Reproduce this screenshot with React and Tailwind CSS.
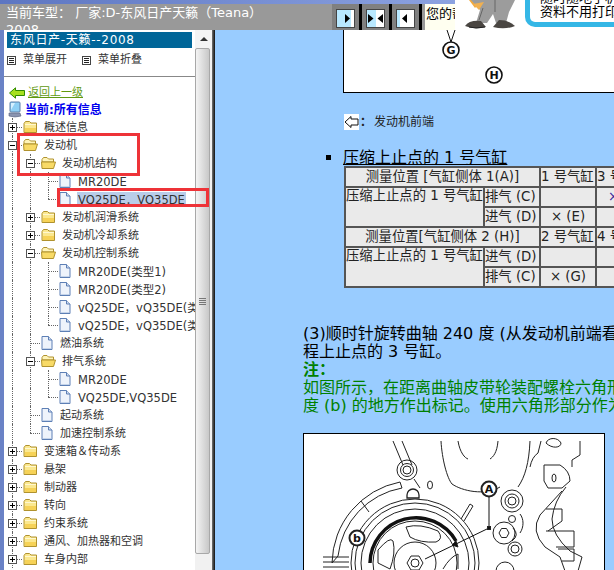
import React from 'react';

const rows = [
  { d: 0, t: '概述信息', k: 'plus' },
  { d: 0, t: '发动机', k: 'minus' },
  { d: 1, t: '发动机结构', k: 'minus' },
  { d: 2, t: 'MR20DE' },
  { d: 2, t: 'VQ25DE．VQ35DE', last: true, sel: true },
  { d: 1, t: '发动机润滑系统', k: 'plus' },
  { d: 1, t: '发动机冷却系统', k: 'plus' },
  { d: 1, t: '发动机控制系统', k: 'minus' },
  { d: 2, t: 'MR20DE(类型1)' },
  { d: 2, t: 'MR20DE(类型2)' },
  { d: 2, t: 'vQ25DE，vQ35DE(类型1)' },
  { d: 2, t: 'vQ25DE，vQ35DE(类型2)', last: true },
  { d: 1, t: '燃油系统' },
  { d: 1, t: '排气系统', k: 'minus' },
  { d: 2, t: 'MR20DE' },
  { d: 2, t: 'VQ25DE,VQ35DE', last: true },
  { d: 1, t: '起动系统' },
  { d: 1, t: '加速控制系统', last: true },
  { d: 0, t: '变速箱＆传动系', k: 'plus' },
  { d: 0, t: '悬架', k: 'plus' },
  { d: 0, t: '制动器', k: 'plus' },
  { d: 0, t: '转向', k: 'plus' },
  { d: 0, t: '约束系统', k: 'plus' },
  { d: 0, t: '通风、加热器和空调', k: 'plus' },
  { d: 0, t: '车身内部', k: 'plus' },
];

function FolderClosed() {
  return (
    <svg width="15" height="14" viewBox="0 0 15 14" className="shrink-0 ml-[1px]">
      <path d="M1 3.5 L2.5 1.5 H6.5 L8 3 H13.5 V12.5 H1 Z" fill="#fbe88f" stroke="#b0922e" />
      <path d="M2 8 H13 V12 H2 Z" fill="#f6d257" />
      <path d="M2 4.5 H13" stroke="#fff8d0" />
    </svg>
  );
}

function FolderOpen() {
  return (
    <svg width="15" height="14" viewBox="0 0 15 14" className="shrink-0 ml-[1px]">
      <path d="M1 3.5 L2.5 1.5 H6 L7.5 3 H12.5 V6 H1 Z" fill="#fff4b8" stroke="#b0922e" />
      <path d="M1 12.5 L0.5 6 H14.5 L12.5 12.5 Z" fill="#f8da66" stroke="#b0922e" />
    </svg>
  );
}

function PageIcon() {
  return (
    <svg width="12" height="14" viewBox="0 0 12 14" className="shrink-0 ml-[1px]">
      <path d="M1 0.5 H7.5 L11 4 V13.5 H1 Z" fill="#eef3fb" stroke="#5d7fb5" />
      <path d="M7.5 0.5 V4 H11" fill="#cfdcf0" stroke="#5d7fb5" />
      <path d="M2 12.5 H10" stroke="#c5d4ea" />
    </svg>
  );
}

function Guide() {
  return (
    <span className="relative w-[18px] h-[18px] shrink-0">
      <span className="absolute left-[8px] top-0 bottom-0 border-l border-dotted border-[#666]" />
    </span>
  );
}

function Connector({ k, last }) {
  return (
    <span className="relative w-[18px] h-[18px] shrink-0">
      <span className={last ? 'absolute left-[8px] top-0 h-[9px] border-l border-dotted border-[#666]' : 'absolute left-[8px] top-0 bottom-0 border-l border-dotted border-[#666]'} />
      <span className="absolute left-[8px] top-[9px] w-[10px] border-t border-dotted border-[#666]" />
      {k && (
        <svg width="9" height="9" viewBox="0 0 9 9" className="absolute left-[4px] top-[5px]">
          <rect x="0.5" y="0.5" width="8" height="8" fill="#fff" stroke="#555" />
          <path d={k === 'plus' ? 'M2 4.5 H7 M4.5 2 V7' : 'M2 4.5 H7'} stroke="#000" />
        </svg>
      )}
    </span>
  );
}

function TreeRow({ row }) {
  const { d, t, k, last, sel } = row;
  let label = k ? 'ml-[6px] mt-[2px] leading-[14px]' : 'ml-[7px] mt-[2px] leading-[14px]';
  if (d === 2) label = 'ml-[7px] mt-[2px] leading-[14px] text-[11.5px]';
  if (sel) label = 'ml-[6px] px-[1px] h-[14px] leading-[16px] text-[11.5px] bg-[#b9cde9]';
  return (
    <div className="flex items-center h-[18px] whitespace-nowrap">
      {d > 0 && <Guide />}
      {d > 1 && <Guide />}
      <Connector k={k} last={last} />
      {k === 'plus' && <FolderClosed />}
      {k === 'minus' && <FolderOpen />}
      {!k && <PageIcon />}
      <span className={label}>{t}</span>
    </div>
  );
}

function MenuIcon() {
  return (
    <svg width="9" height="9" viewBox="0 0 9 9" className="shrink-0">
      <rect x="0.5" y="0.5" width="8" height="8" fill="#fff" stroke="#444" />
      <path d="M2 2.5 H7 M2 4.5 H7 M2 6.5 H7" stroke="#222" />
    </svg>
  );
}

function Sidebar() {
  return (
    <aside className="flex w-[215px] shrink-0 h-full">
      <div className="w-[4px] bg-[#6a82c6] shrink-0" />
      <div className="w-[191px] shrink-0 bg-white overflow-hidden text-[11px] text-[#333]">
        <div className="mt-[2px] mx-[3px] h-[16px] bg-[#006699] text-white text-[12px] tracking-[0.7px] leading-[16px] pl-[3px] whitespace-nowrap">东风日产-天籁--2008</div>
        <div className="flex items-center h-[16px] mt-[4px] pl-[3px]">
          <MenuIcon />
          <span className="ml-[7px]">菜单展开</span>
          <span className="w-[15px]" />
          <MenuIcon />
          <span className="ml-[7px]">菜单折叠</span>
        </div>
        <div className="mt-[8px] h-[1px] bg-[#888]" />
        <div className="flex items-center h-[16px] mt-[8px] pl-[5px]">
          <svg width="16" height="12" viewBox="0 0 16 12" className="shrink-0">
            <path d="M0.5 6 L6.5 0.8 V3.5 H15.5 V8.5 H6.5 V11.2 Z" fill="#a6e01e" stroke="#2f8a00" />
          </svg>
          <span className="ml-[3px] text-[#5f9a10] underline">返回上一级</span>
        </div>
        <div className="flex items-center h-[17px] pl-[4px]">
          <svg width="14" height="17" viewBox="0 0 14 17" className="shrink-0">
            <rect x="2" y="1" width="10" height="10" rx="1" fill="#8fd0f5" stroke="#5c7fa8" />
            <path d="M3 2 L7 2 L3 9 Z" fill="#d6f0ff" />
            <path d="M1 12 H12 L13 15 Q7 17 1 15 Z" fill="#8a94b0" stroke="#55607e" strokeWidth="0.6" />
          </svg>
          <span className="ml-[3px] text-[12px] font-bold text-[#0000ee]">当前:所有信息</span>
        </div>
        {rows.map((row, i) => <TreeRow key={i} row={row} />)}
      </div>
      <div className="w-[17px] shrink-0 bg-[#f1f1f1] flex flex-col items-center">
        <div className="h-[18px] w-full flex items-center justify-center bg-[#f4f4f4]">
          <span className="w-0 h-0 border-x-[4px] border-x-transparent border-b-[4px] border-b-[#333]" />
        </div>
        <div className="h-[506px] w-[15px] self-start border border-[#a8a8a8] rounded-[2px] bg-gradient-to-r from-[#f4f4f4] to-[#c8c8c8] flex items-center justify-center">
          <div className="w-[7px] flex flex-col gap-[1px]">
            <span className="h-[1px] bg-[#777]" />
            <span className="h-[1px] bg-[#777]" />
            <span className="h-[1px] bg-[#777]" />
            <span className="h-[1px] bg-[#777]" />
          </div>
        </div>
      </div>
      <div className="w-[3px] shrink-0 bg-gradient-to-r from-[#777] to-[#111]" />
    </aside>
  );
}

function ToolButton({ blue, arrows }) {
  return (
    <div className="w-[30px] h-[26px] shrink-0 bg-[#808080] border-r-[3px] border-r-black pl-[4px] pt-[5px]">
      <svg width="19" height="19" viewBox="0 0 19 19">
        <rect x="0.5" y="0.5" width="18" height="18" fill="#fff" stroke="#444" />
        <rect x="1" y="1" width={blue} height="17" fill="#b8e8ff" />
        {arrows === 'right' && <path d="M9 5 L14 9.5 L9 14 Z" fill="#000" />}
        {arrows === 'left' && <path d="M11 5 L6 9.5 L11 14 Z" fill="#000" />}
        {arrows === 'both' && <path d="M2 5 L7.5 9.5 L2 14 Z M17 5 L11.5 9.5 L17 14 Z" fill="#000" />}
      </svg>
    </div>
  );
}

function Mascot() {
  return (
    <div className="w-[66px] h-[30px] shrink-0 bg-white">
      <svg width="66" height="30" viewBox="0 0 66 30">
        <path d="M14 0 L20 8 L27 0 Z" fill="#f2a93c" />
        <path d="M16 0 H60 L54 12 L51 23 H41 L38 14 L32 23 H21 L25 10 Z" fill="#9c9c9c" />
        <path d="M40 0 V12 M28 8 L24 20" stroke="#666" fill="none" />
        <path d="M18 4 L24 10 L29 2 Z" fill="#f0b050" />
        <path d="M10 26 Q14 20 26 21 L31 27 Q20 30 10 26 Z" fill="#4a4642" />
        <path d="M38 27 L44 20 Q54 20 60 26 Q50 30 38 27 Z" fill="#4a4642" />
        <path d="M14 27 Q20 29 30 27" stroke="#222" fill="none" />
      </svg>
    </div>
  );
}

function Header() {
  return (
    <header className="flex h-[30px] shrink-0 overflow-hidden">
      <div className="w-[455px] shrink-0 flex flex-col">
        <div className="h-[4px] bg-gradient-to-r from-[#5d76c2] to-[#8ca2e0]" />
        <div className="flex h-[26px] bg-[#999]">
          <div className="w-[332px] shrink-0 text-white text-[13px] leading-[17px] pl-[6px] overflow-hidden">
            <div className="whitespace-nowrap">当前车型： 厂家:D-东风日产天籁（Teana）</div>
            <div>2008</div>
          </div>
          <ToolButton blue={14} arrows="right" />
          <ToolButton blue={9} arrows="both" />
          <ToolButton blue={3} arrows="left" />
          <div className="w-[3px] shrink-0" />
          <div className="flex-1 bg-[#fffff0] text-black text-[13px] leading-[20px] pl-[1px] overflow-hidden whitespace-nowrap">您的帮</div>
        </div>
      </div>
      <Mascot />
      <div className="flex-1 bg-white overflow-hidden pl-[4px]">
        <div className="w-[120px] h-[27px] bg-white border-[5px] border-t-0 border-[#35b7e6] rounded-b-[10px] pl-[10px] text-[13px] leading-[14px] text-black whitespace-nowrap overflow-hidden">
          <div className="-mt-[9px]">随时随地手机</div>
          <div>资料不用打印</div>
        </div>
      </div>
    </header>
  );
}

function EngineDrawing() {
  return (
    <svg width="300" height="138" viewBox="304 433 300 138" fill="none" stroke="#222" strokeWidth="1">
      <path d="M393 440 L403 464 M402 440 L412 464" />
      <circle cx="407" cy="469" r="10" />
      <circle cx="407" cy="469" r="6.5" />
      <circle cx="407" cy="469" r="4" />
      <path d="M414 478 L420 487" />
      <ellipse cx="430" cy="484" rx="2.5" ry="4" />
      <path d="M407 494 A6 6 0 0 1 419 494 V497 H407 Z" strokeWidth="1.3" />
      <path d="M332 562 A84 84 0 0 1 400 481 L402 487 A78 78 0 0 0 338 555 Z" />
      <path d="M361 500 L369 511" />
      <circle cx="415" cy="562" r="64" />
      <circle cx="415" cy="562" r="60" />
      <circle cx="415" cy="562" r="54" />
      <path d="M370 562 A46 46 0 0 1 456 540" stroke="#111" strokeWidth="3.5" />
      <path d="M456 540 L458 546 L452 544 Z" fill="#111" />
      <circle cx="415" cy="562" r="42" />
      <circle cx="415" cy="562" r="21" />
      <path d="M407 562 L411 555 L419 555 L423 562 L419 569 L411 569 Z" />
      <circle cx="415" cy="562" r="4" />
      <path d="M406 526 Q420 522 438 530 Q444 538 436 541 Q420 542 410 536 Z" />
      <path d="M378 549 Q390 535 393 540 Q396 552 390 568 L378 562 Z" />
      <path d="M443 568 Q450 556 458 553 L458 568" />
      <path d="M323 556 H349 M323 561 H349 M323 566 H349" />
      <path d="M461 518 L470 503 L473 505 L464 520" />
      <path d="M441 440 C442 458 447 477 452 483 C462 490 485 495 500 486" />
      <path d="M530 440 C529 462 525 476 518 486" />
      <path d="M458 440 C460 452 465 457 468 458" />
      <path d="M498 440 C497 452 493 456 490 458" />
      <circle cx="512" cy="500" r="11" />
      <circle cx="512" cy="500" r="7" />
      <circle cx="512" cy="500" r="4" />
      <circle cx="512" cy="518" r="3.5" />
      <path d="M520 513 C524 518 524 526 520 532" />
      <circle cx="504" cy="532" r="11" />
      <path d="M499 532 L501.5 527.5 L506.5 527.5 L509 532 L506.5 536.5 L501.5 536.5 Z" />
      <path d="M513 527 Q520 534 512 540" />
      <circle cx="515" cy="548" r="7" />
      <circle cx="515" cy="548" r="4" />
      <circle cx="505" cy="570" r="9" />
      <path d="M489 494 V526" stroke="#111" />
      <path d="M489 527 L425 558" stroke="#111" />
      <rect x="487.5" y="525.5" width="3" height="3" fill="#111" />
      <circle cx="489" cy="488" r="7.5" fill="#fff" strokeWidth="2" />
      <circle cx="357" cy="537" r="7.5" fill="#fff" strokeWidth="2" />
      <text x="489" y="492" textAnchor="middle" fontSize="11" fontWeight="700" fill="#111" stroke="none">A</text>
      <text x="357" y="541" textAnchor="middle" fontSize="11" fontWeight="700" fill="#111" stroke="none">b</text>
      <path d="M546 442 C548 436 558 436 561 442 C561 447 552 448 546 442 Z" />
      <path d="M541 440 L538 452 Q532 456 530 466 M580 440 V454 L572 459 V466" />
      <path d="M544 464 H560 Q570 470 570 480 L562 487 L548 487 L544 480 Z" />
      <ellipse cx="554" cy="477" rx="2" ry="4" />
      <path d="M562 490 L540 514 Q530 530 545 546 L560 556 L565 570 M566 486 Q554 500 552 518 Q552 534 570 550 L582 556 L578 570" />
      <path d="M546 508 H562 V520 L548 530 M546 530 H574 V546 H556 M558 548 H574 V560 H562" />
    </svg>
  );
}

function CompressTable() {
  const td = 'border-2 border-[#555] h-[20px] p-0 bg-[#eaeaea] whitespace-nowrap overflow-hidden';
  return (
    <table className="ml-[129px] w-[307px] table-fixed border-collapse border-2 border-[#555] text-[13.33px] leading-[16px] text-[#222] shrink-0">
      <colgroup>
        <col className="w-[139px]" />
        <col className="w-[56px]" />
        <col className="w-[56px]" />
        <col className="w-[56px]" />
      </colgroup>
      <tbody>
        <tr>
          <td colSpan={2} className={td + ' text-center'}>测量位置 [气缸侧体 1(A)]</td>
          <td className={td}>1 号气缸</td>
          <td className={td}>3 号气缸</td>
        </tr>
        <tr>
          <td rowSpan={2} className={td + ' align-top'}>压缩上止点的 1 号气缸</td>
          <td className={td}>排气 (C)</td>
          <td className={td} />
          <td className={td + ' pl-[11px] text-[#3a1a9a]'}>×</td>
        </tr>
        <tr>
          <td className={td}>进气 (D)</td>
          <td className={td + ' text-center'}>× (E)</td>
          <td className={td} />
        </tr>
        <tr>
          <td colSpan={2} className={td + ' text-center'}>测量位置[气缸侧体 2 (H)]</td>
          <td className={td}>2 号气缸</td>
          <td className={td}>4 号气缸</td>
        </tr>
        <tr>
          <td rowSpan={2} className={td + ' align-top'}>压缩上止点的 1 号气缸</td>
          <td className={td}>进气 (D)</td>
          <td className={td} />
          <td className={td} />
        </tr>
        <tr>
          <td className={td}>排气 (C)</td>
          <td className={td + ' text-center'}>× (G)</td>
          <td className={td} />
        </tr>
      </tbody>
    </table>
  );
}

function Main() {
  return (
    <main className="flex-1 min-w-0 h-full bg-[#99ccff] overflow-hidden flex flex-col text-black">
      <div className="ml-[128px] w-[320px] h-[63px] shrink-0 bg-white border-l border-b border-black">
        <svg width="200" height="62" viewBox="0 0 200 62" fill="none" stroke="#111">
          <path d="M103 0 L107 12 L111 0" />
          <circle cx="107" cy="20" r="8" strokeWidth="1.6" />
          <text x="107" y="24" textAnchor="middle" fontSize="11" fontWeight="700" fill="#111" stroke="none">G</text>
          <circle cx="150" cy="45" r="8" strokeWidth="1.6" />
          <text x="150" y="49" textAnchor="middle" fontSize="11" fontWeight="700" fill="#111" stroke="none">H</text>
        </svg>
      </div>
      <div className="flex items-center ml-[129px] mt-[21px] h-[16px] shrink-0 text-[12px] text-[#222]">
        <svg width="15" height="16" viewBox="0 0 15 16" className="shrink-0 bg-white">
          <path d="M1 8 L7 2.5 V5 H14 V11 H7 V13.5 Z" fill="#fff" stroke="#111" />
        </svg>
        <span className="ml-[1px] font-bold">：</span>
        <span className="ml-[2px]">发动机前端</span>
      </div>
      <div className="flex items-center mt-[19px] h-[17px] shrink-0 ml-[111px]">
        <span className="w-[5px] h-[5px] bg-black shrink-0" />
        <span className="ml-[12px] text-[16px] leading-[18px] underline whitespace-nowrap">压缩上止点的 1 号气缸</span>
      </div>
      <CompressTable />
      <div className="ml-[88px] mt-[37px] text-[16px] leading-[18px] whitespace-nowrap shrink-0">
        <div>(3)顺时针旋转曲轴 240 度 (从发动机前端看，</div>
        <div>程上止点的 3 号缸。</div>
        <div className="text-[#008000] font-bold">注：</div>
        <div className="text-[#008000]">如图所示，在距离曲轴皮带轮装配螺栓六角形</div>
        <div className="text-[#008000]">度 (b) 的地方作出标记。使用六角形部分作为</div>
      </div>
      <div className="ml-[88px] mt-[18px] w-[302px] h-[160px] shrink-0 bg-white border border-black overflow-hidden">
        <EngineDrawing />
      </div>
    </main>
  );
}

export default function App() {
  return (
    <div className="relative w-[614px] h-[570px] overflow-hidden flex flex-col bg-white font-['DejaVu_Sans','Noto_Sans_CJK_SC',sans-serif]">
      <Header />
      <div className="flex flex-1 min-h-0">
        <Sidebar />
        <Main />
      </div>
      <div className="absolute left-[17px] top-[133px] w-[123px] h-[43px] border-[3px] border-[#ee3338]" />
      <div className="absolute left-[57px] top-[188px] w-[152px] h-[19px] border-[3px] border-[#ee3338]" />
    </div>
  );
}
